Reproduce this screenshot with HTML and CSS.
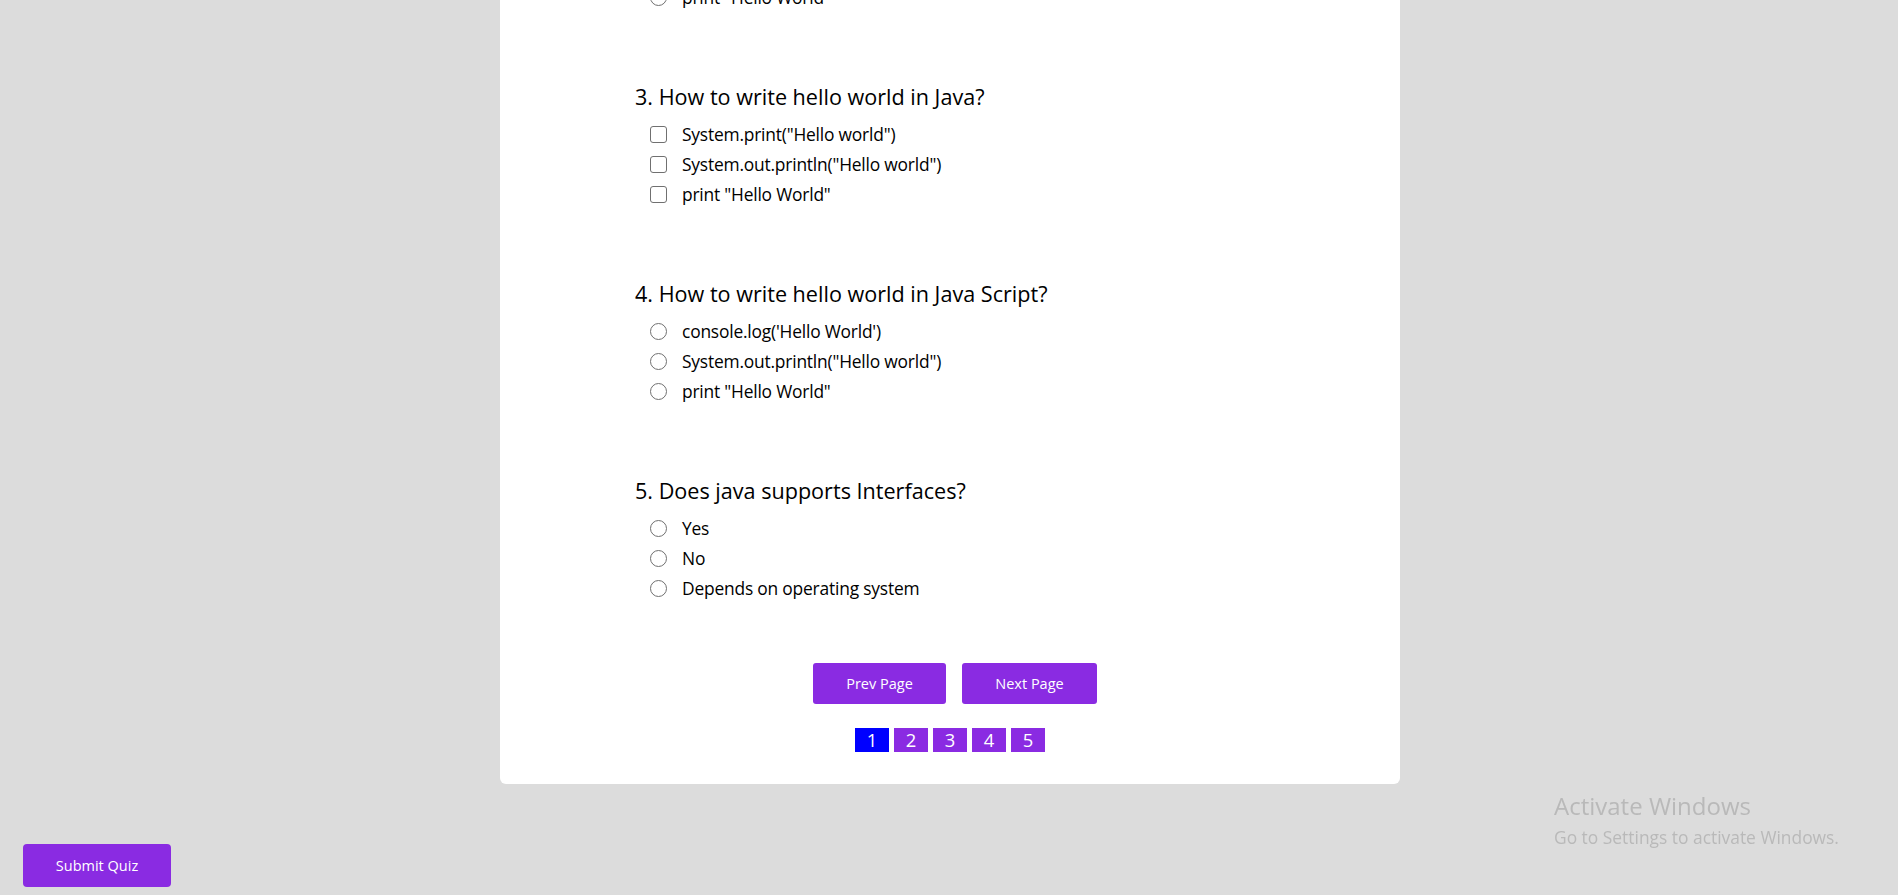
FILE: index.html
```html
<!DOCTYPE html>
<html lang="en">
<head>
<meta charset="utf-8">
<title>Quiz</title>
<link rel="stylesheet" href="styles.css">
</head>
<body>
<div class="page">
  <main class="card">
    <div class="questions">
      <section class="question">
        <h3 class="q-title">2. How to print hello world in Python?</h3>
        <ul class="options">
          <li class="option"><input type="radio" class="mark round" name="q2"><span>print("Hello world")</span></li>
          <li class="option"><input type="radio" class="mark round" name="q2"><span>System.out.println("Hello world")</span></li>
          <li class="option"><input type="radio" class="mark round" name="q2"><span>print "Hello World"</span></li>
        </ul>
      </section>
      <section class="question">
        <h3 class="q-title">3. How to write hello world in Java?</h3>
        <ul class="options">
          <li class="option"><input type="checkbox" class="mark square"><span>System.print("Hello world")</span></li>
          <li class="option"><input type="checkbox" class="mark square"><span>System.out.println("Hello world")</span></li>
          <li class="option"><input type="checkbox" class="mark square"><span>print "Hello World"</span></li>
        </ul>
      </section>
      <section class="question">
        <h3 class="q-title">4. How to write hello world in Java Script?</h3>
        <ul class="options">
          <li class="option"><input type="radio" class="mark round" name="q4"><span>console.log('Hello World')</span></li>
          <li class="option"><input type="radio" class="mark round" name="q4"><span>System.out.println("Hello world")</span></li>
          <li class="option"><input type="radio" class="mark round" name="q4"><span>print "Hello World"</span></li>
        </ul>
      </section>
      <section class="question">
        <h3 class="q-title">5. Does java supports Interfaces?</h3>
        <ul class="options">
          <li class="option"><input type="radio" class="mark round" name="q5"><span>Yes</span></li>
          <li class="option"><input type="radio" class="mark round" name="q5"><span>No</span></li>
          <li class="option"><input type="radio" class="mark round" name="q5"><span>Depends on operating system</span></li>
        </ul>
      </section>
    </div>
    <div class="nav">
      <button class="btn btn-prev">Prev Page</button>
      <button class="btn btn-next">Next Page</button>
    </div>
    <div class="pager">
      <span class="page-num active">1</span>
      <span class="page-num">2</span>
      <span class="page-num">3</span>
      <span class="page-num">4</span>
      <span class="page-num">5</span>
    </div>
  </main>
  <div class="footer">
    <button class="btn btn-submit">Submit Quiz</button>
  </div>
</div>
<div class="watermark">
  <div class="wm-title">Activate Windows</div>
  <div class="wm-sub">Go to Settings to activate Windows.</div>
</div>
</body>
</html>
```

FILE: styles.css
```css
html, body {
  margin: 0;
  padding: 0;
  height: 100%;
  overflow: hidden;
}

body {
  background: #dcdcdc;
  font-family: "Open Sans", "Noto Sans", sans-serif;
  color: #000;
}

.page {
  display: flex;
  flex-direction: column;
}

.card {
  width: 900px;
  margin: -157px auto 0;
  background: #fff;
  border-radius: 6px;
  padding: 40px 0 32px 135px;
  box-sizing: border-box;
  display: flex;
  flex-direction: column;
  position: relative;
  left: 1px;
}

.questions {
  display: flex;
  flex-direction: column;
  gap: 68px;
}

.q-title {
  margin: 0;
  font-size: 21.6px;
  font-weight: 400;
  line-height: 34px;
  height: 32px;
}

.options {
  list-style: none;
  margin: 7px 0 0;
  padding: 0 0 0 15px;
  display: flex;
  flex-direction: column;
}

.option {
  height: 30px;
  display: flex;
  align-items: center;
  gap: 15px;
  font-size: 17.4px;
  letter-spacing: -0.2px;
}

.mark {
  appearance: none;
  -webkit-appearance: none;
  margin: 0;
  width: 17px;
  height: 17px;
  border: 1.6px solid #707070;
  background: #fff;
  box-sizing: border-box;
  flex: none;
}

.square { border-radius: 3px; }
.round { border-radius: 50%; }

.nav {
  display: flex;
  justify-content: center;
  gap: 16px;
  margin: 60px 0 0 -125px;
}

.btn {
  background: #8a2be2;
  color: #fff;
  border: none;
  border-radius: 3px;
  font-family: "Open Sans", "Noto Sans", sans-serif;
  font-size: 14.5px;
  height: 41px;
  padding: 0;
}

.btn-prev { width: 133px; }
.btn-next { width: 135px; }

.pager {
  display: flex;
  justify-content: center;
  gap: 5px;
  margin: 24px 0 0 -135px;
}

.page-num {
  width: 34px;
  height: 24px;
  background: #8a2be2;
  color: #fff;
  font-size: 18.4px;
  line-height: 24px;
  text-align: center;
}

.page-num.active { background: #0000ff; }

.footer {
  display: flex;
  padding: 60px 0 0 23px;
}

.btn-submit {
  width: 148px;
  height: 43px;
  border-radius: 4px;
}

.watermark {
  position: fixed;
  left: 1554px;
  top: 791px;
  color: #b9b9b9;
  font-family: "Open Sans", "Noto Sans", sans-serif;
}

.wm-title {
  font-size: 24px;
  line-height: 30px;
}

.wm-sub {
  margin-top: 4px;
  font-size: 17.4px;
  line-height: 24px;
}
```
